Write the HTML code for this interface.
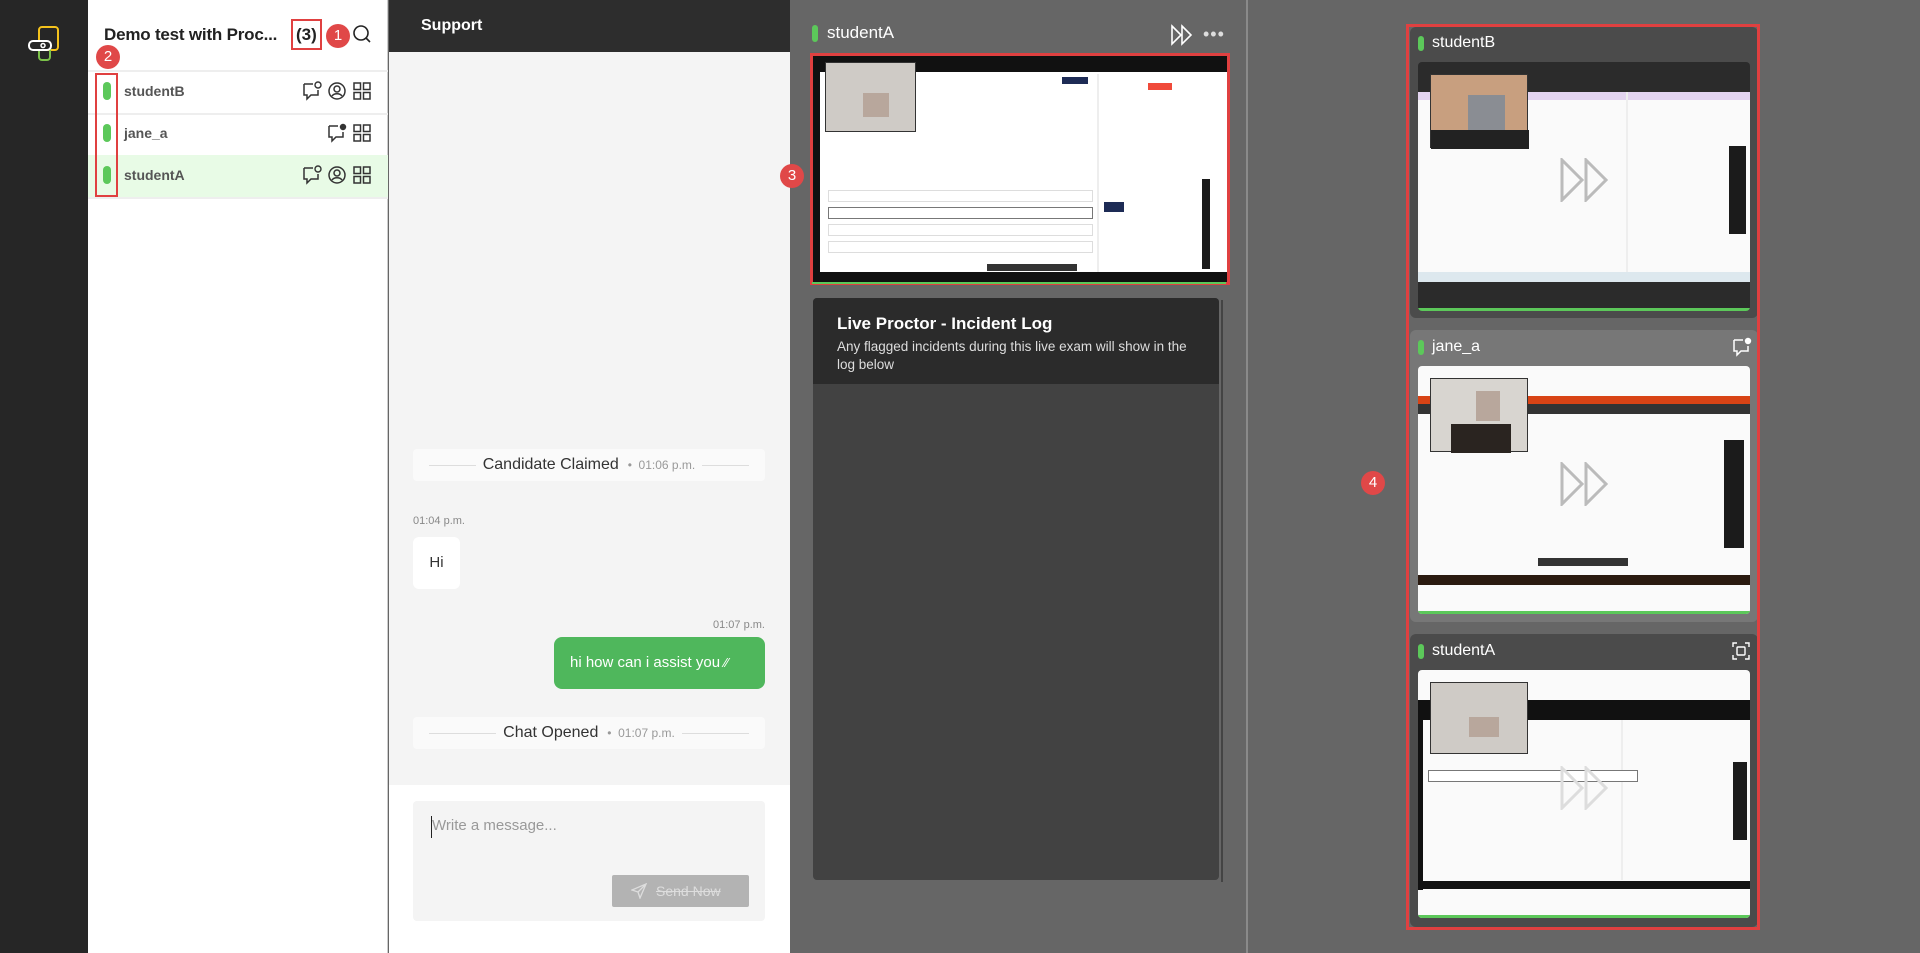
<!DOCTYPE html>
<html><head><meta charset="utf-8">
<style>
*{box-sizing:border-box;margin:0;padding:0}
body{width:1920px;height:953px;overflow:hidden;background:#666;font-family:"Liberation Sans",sans-serif;position:relative}
.a{position:absolute}
.pill{position:absolute;width:8px;height:18px;border-radius:4px;background:#5cc85a}
.badge{position:absolute;width:24px;height:24px;border-radius:50%;background:#e04848;color:#fff;font-size:15px;text-align:center;line-height:24px}
.ev{position:absolute;left:413px;width:352px;height:32px;background:#fafafa;border-radius:4px;font-size:16px;color:#333;text-align:center;line-height:32px}
.ev .ln{position:absolute;top:16px;height:1px;background:#ddd}
.ev small{font-size:12px;color:#999}
.scr{position:absolute;background:#fafafa;overflow:hidden}
.cam{position:absolute;background:#c9c4bd;border:1px solid #333}
.face{position:absolute;background:#b8a79c}
.row{position:absolute;height:12px;background:#fff;border:1px solid #ddd}
.ff{position:absolute}
</style></head><body>
<div class="a" style="left:0;top:0;width:88px;height:953px;background:#262626"></div>
<svg class="a" style="left:26px;top:24px" width="36" height="40" viewBox="0 0 36 40">
<rect x="13" y="3" width="19" height="23" rx="3" fill="none" stroke="#f4c21c" stroke-width="2"/>
<rect x="13" y="18" width="11" height="18" rx="3" fill="none" stroke="#7cc24a" stroke-width="2"/>
<rect x="3" y="17" width="22" height="9" rx="4" fill="#262626" stroke="#fff" stroke-width="2"/>
<circle cx="17" cy="21.5" r="2" fill="none" stroke="#fff" stroke-width="1.5"/>
</svg>
<div class="a" style="left:88px;top:0;width:300px;height:953px;background:#fff;border-right:1px solid #ccc"></div>
<div class="a" style="left:104px;top:25px;font-size:17px;font-weight:bold;color:#222;letter-spacing:-0.2px">Demo test with Proc...</div>
<div class="a" style="left:296px;top:25px;font-size:17px;font-weight:bold;color:#222">(3)</div>
<div class="a" style="left:291px;top:19px;width:31px;height:31px;border:2px solid #e04040"></div>
<div class="badge" style="left:326px;top:24px">1</div>
<svg class="a" style="left:352px;top:24px" width="20" height="20" viewBox="0 0 20 20"><circle cx="9" cy="9" r="7" fill="none" stroke="#222" stroke-width="1.6"/><path d="M14 14l4 4" stroke="#222" stroke-width="1.6"/></svg>
<div class="badge" style="left:96px;top:45px">2</div>
<div class="a" style="left:88px;top:70px;width:300px;height:2px;background:#eee"></div>
<div class="a" style="left:88px;top:113px;width:300px;height:2px;background:#eee"></div>
<div class="a" style="left:88px;top:155px;width:300px;height:42px;background:#e8fbe6"></div>
<div class="a" style="left:88px;top:197px;width:300px;height:2px;background:#eee"></div>
<div class="pill" style="left:103px;top:82px"></div>
<div class="pill" style="left:103px;top:124px"></div>
<div class="pill" style="left:103px;top:166px"></div>
<div class="a" style="left:95px;top:73px;width:23px;height:124px;border:2px solid #e04040"></div>
<div class="a" style="left:124px;top:83px;font-size:14px;font-weight:bold;color:#555">studentB</div>
<div class="a" style="left:124px;top:125px;font-size:14px;font-weight:bold;color:#555">jane_a</div>
<div class="a" style="left:124px;top:167px;font-size:14px;font-weight:bold;color:#555">studentA</div>
<svg width="0" height="0" style="position:absolute"><defs>
<g id="chat"><path d="M2 3h9M2 3v11h3v4l4-4h7v-5" fill="none" stroke="#333" stroke-width="1.5"/><circle cx="16" cy="4" r="3" fill="none" stroke="#333" stroke-width="1.4"/></g>
<g id="chatf"><path d="M2 3h9M2 3v11h3v4l4-4h7v-5" fill="none" stroke="#333" stroke-width="1.5"/><circle cx="16" cy="4" r="3.2" fill="#333"/></g>
<g id="user"><circle cx="10" cy="10" r="8" fill="none" stroke="#333" stroke-width="1.5"/><circle cx="10" cy="8" r="3" fill="none" stroke="#333" stroke-width="1.5"/><path d="M5 15c2-3 8-3 10 0" fill="none" stroke="#333" stroke-width="1.5"/></g>
<g id="grid"><rect x="2" y="2" width="6.5" height="6.5" fill="none" stroke="#333" stroke-width="1.5"/><rect x="11.5" y="2" width="6.5" height="6.5" fill="none" stroke="#333" stroke-width="1.5"/><rect x="2" y="11.5" width="6.5" height="6.5" fill="none" stroke="#333" stroke-width="1.5"/><rect x="11.5" y="11.5" width="6.5" height="6.5" fill="none" stroke="#333" stroke-width="1.5"/></g>
</defs></svg>
<svg class="a" style="left:302px;top:81px" width="20" height="20"><use href="#chat"/></svg>
<svg class="a" style="left:327px;top:81px" width="20" height="20"><use href="#user"/></svg>
<svg class="a" style="left:352px;top:81px" width="20" height="20"><use href="#grid"/></svg>
<svg class="a" style="left:327px;top:123px" width="20" height="20"><use href="#chatf"/></svg>
<svg class="a" style="left:352px;top:123px" width="20" height="20"><use href="#grid"/></svg>
<svg class="a" style="left:302px;top:165px" width="20" height="20"><use href="#chat"/></svg>
<svg class="a" style="left:327px;top:165px" width="20" height="20"><use href="#user"/></svg>
<svg class="a" style="left:352px;top:165px" width="20" height="20"><use href="#grid"/></svg>
<div class="a" style="left:389px;top:0;width:401px;height:52px;background:#2d2d2d"></div>
<div class="a" style="left:421px;top:17px;font-size:16px;font-weight:bold;color:#fff">Support</div>
<div class="a" style="left:389px;top:52px;width:401px;height:733px;background:#f4f4f4"></div>
<div class="a" style="left:389px;top:785px;width:401px;height:168px;background:#fff"></div>
<div class="ev" style="top:449px"><div class="ln" style="left:16px;width:47px"></div><div class="ln" style="right:16px;width:47px"></div>Candidate Claimed &nbsp;<small>•&nbsp; 01:06 p.m.</small></div>
<div class="a" style="left:413px;top:515px;font-size:11px;color:#888">01:04 p.m.</div>
<div class="a" style="left:413px;top:537px;width:47px;height:52px;background:#fff;border-radius:6px;font-size:15px;color:#333;line-height:52px;text-align:center">Hi</div>
<div class="a" style="left:700px;top:619px;font-size:11px;color:#888;width:65px;text-align:right">01:07 p.m.</div>
<div class="a" style="left:554px;top:637px;width:211px;height:52px;background:#4fb75c;border-radius:8px;font-size:15px;color:#fff;line-height:52px;padding-left:16px">hi how can i assist you <span style="font-size:13px">⁄⁄</span></div>
<div class="ev" style="top:717px"><div class="ln" style="left:16px;width:67px"></div><div class="ln" style="right:16px;width:67px"></div>Chat Opened &nbsp;<small>•&nbsp; 01:07 p.m.</small></div>
<div class="a" style="left:413px;top:801px;width:352px;height:120px;background:#f4f4f4;border-radius:4px"></div>
<div class="a" style="left:431px;top:816px;width:1px;height:22px;background:#222"></div>
<div class="a" style="left:432px;top:817px;font-size:15px;color:#999">Write a message...</div>
<div class="a" style="left:612px;top:875px;width:137px;height:32px;background:#b3b3b3;border-radius:2px;color:#ddd;font-size:14px;line-height:32px;padding-left:44px;text-decoration:line-through">Send Now</div>
<svg class="a" style="left:631px;top:883px" width="16" height="16" viewBox="0 0 16 16"><path d="M1 7l14-6-6 14-2-6z M7 9l8-8" fill="none" stroke="#ddd" stroke-width="1.3"/></svg>
<div class="pill" style="left:812px;top:25px;height:17px;width:6px"></div>
<div class="a" style="left:827px;top:23px;font-size:17px;color:#fff">studentA</div>
<svg class="a" style="left:1170px;top:24px" width="24" height="22" viewBox="0 0 24 22"><path d="M2 2l9 9-9 9z M12 2l9 9-9 9z" fill="none" stroke="#fff" stroke-width="1.6"/></svg>
<div class="a" style="left:1203px;top:24px;font-size:18px;color:#ddd;letter-spacing:1px">•••</div>
<div class="scr" style="left:812px;top:54px;width:416px;height:230px;background:#fff">
 <div class="ff" style="left:0;top:0;width:416px;height:18px;background:#111"></div>
 <div class="ff" style="left:0;top:0;width:8px;height:230px;background:#111"></div>
 <div class="ff" style="left:0;top:218px;width:416px;height:12px;background:#111"></div>
 <div class="ff" style="left:285px;top:20px;width:2px;height:198px;background:#eee"></div>
 <div class="cam" style="left:13px;top:8px;width:91px;height:70px;background:#cfcbc6"><div class="face" style="left:37px;top:30px;width:26px;height:24px"></div></div>
 <div class="row" style="left:16px;top:136px;width:265px"></div>
 <div class="row" style="left:16px;top:153px;width:265px;border-color:#777"></div>
 <div class="row" style="left:16px;top:170px;width:265px"></div>
 <div class="row" style="left:16px;top:187px;width:265px"></div>
 <div class="ff" style="left:336px;top:29px;width:24px;height:7px;background:#f04a3a"></div>
 <div class="ff" style="left:250px;top:23px;width:26px;height:7px;background:#1d2b55"></div>
 <div class="ff" style="left:292px;top:148px;width:20px;height:10px;background:#1d2b55"></div>
 <div class="ff" style="left:390px;top:125px;width:8px;height:90px;background:#1b1b1b"></div>
 <div class="ff" style="left:175px;top:210px;width:90px;height:7px;background:#333"></div>
</div>
<div class="a" style="left:810px;top:53px;width:420px;height:232px;border:3px solid #e04040"></div>
<div class="a" style="left:812px;top:282px;width:414px;height:2px;background:#5cc85a"></div>
<div class="badge" style="left:780px;top:164px">3</div>
<div class="a" style="left:813px;top:298px;width:406px;height:582px;background:#424242;border-radius:4px"></div>
<div class="a" style="left:813px;top:298px;width:406px;height:86px;background:#2b2b2b;border-radius:4px 4px 0 0"></div>
<div class="a" style="left:1221px;top:300px;width:2px;height:582px;background:#444"></div>
<div class="a" style="left:837px;top:314px;font-size:17px;font-weight:bold;color:#fff">Live Proctor - Incident Log</div>
<div class="a" style="left:837px;top:338px;width:370px;font-size:13.5px;line-height:18px;color:#ddd">Any flagged incidents during this live exam will show in the log below</div>
<div class="a" style="left:1246px;top:0;width:2px;height:953px;background:#8a8a8a"></div>
<div class="badge" style="left:1361px;top:471px">4</div>
<div class="a" style="left:1410px;top:27px;width:348px;height:291px;background:#4b4b4b;border-radius:6px"></div>
<div class="a" style="left:1410px;top:330px;width:348px;height:292px;background:#777;border-radius:6px"></div>
<div class="a" style="left:1410px;top:634px;width:348px;height:293px;background:#4b4b4b;border-radius:6px"></div>
<div class="pill" style="left:1418px;top:36px;height:15px;width:6px"></div>
<div class="a" style="left:1432px;top:34px;font-size:16px;color:#fff">studentB</div>
<div class="pill" style="left:1418px;top:340px;height:15px;width:6px"></div>
<div class="a" style="left:1432px;top:338px;font-size:16px;color:#fff">jane_a</div>
<svg class="a" style="left:1732px;top:337px" width="20" height="20"><path d="M2 3h9M2 3v11h3v4l4-4h7v-5" fill="none" stroke="#fff" stroke-width="1.5"/><circle cx="16" cy="4" r="3.2" fill="#fff"/></svg>
<div class="pill" style="left:1418px;top:644px;height:15px;width:6px"></div>
<div class="a" style="left:1432px;top:642px;font-size:16px;color:#fff">studentA</div>
<svg class="a" style="left:1732px;top:642px" width="18" height="18" viewBox="0 0 18 18"><path d="M1 5V1h4M13 1h4v4M17 13v4h-4M5 17H1v-4" fill="none" stroke="#fff" stroke-width="1.4"/><rect x="5" y="5" width="8" height="8" rx="1" fill="none" stroke="#fff" stroke-width="1.4"/></svg>
<div class="scr" style="left:1418px;top:62px;width:332px;height:249px;background:#2b2b2b;border-radius:4px">
 <div class="ff" style="left:0;top:30px;width:332px;height:190px;background:#fafafa"></div>
 <div class="ff" style="left:0;top:30px;width:332px;height:8px;background:#e3d4f0"></div>
 <div class="ff" style="left:0;top:210px;width:332px;height:10px;background:#dde8ee"></div>
 <div class="cam" style="left:12px;top:12px;width:98px;height:74px;background:#c89f7f"><div class="face" style="left:37px;top:20px;width:37px;height:42px;background:#8a8d93"></div><div class="ff" style="left:0;top:55px;width:98px;height:19px;background:#222"></div></div>
 <div class="ff" style="left:208px;top:30px;width:2px;height:180px;background:#eee"></div>
 <div class="ff" style="left:311px;top:84px;width:17px;height:88px;background:#1b1b1b"></div>
 <svg class="ff" style="left:142px;top:96px" width="50" height="44" viewBox="0 0 50 44"><path d="M2 2l20 20-20 20z M26 2l20 20-20 20z" fill="none" stroke="#bbb" stroke-width="3"/></svg>
 <div class="ff" style="left:0;top:246px;width:332px;height:3px;background:#5cc85a"></div>
</div>
<div class="scr" style="left:1418px;top:366px;width:332px;height:248px;border-radius:4px">
 <div class="ff" style="left:0;top:30px;width:332px;height:8px;background:#d84315"></div>
 <div class="ff" style="left:0;top:38px;width:332px;height:10px;background:#333"></div>
 <div class="ff" style="left:0;top:209px;width:332px;height:10px;background:#2a1a10"></div>
 <div class="cam" style="left:12px;top:12px;width:98px;height:74px;background:#d8d5d0"><div class="face" style="left:45px;top:12px;width:24px;height:30px"></div><div class="ff" style="left:20px;top:45px;width:60px;height:29px;background:#2a2420"></div></div>
 <div class="ff" style="left:306px;top:74px;width:20px;height:108px;background:#1b1b1b"></div>
 <div class="ff" style="left:120px;top:192px;width:90px;height:8px;background:#333"></div>
 <svg class="ff" style="left:142px;top:96px" width="50" height="44" viewBox="0 0 50 44"><path d="M2 2l20 20-20 20z M26 2l20 20-20 20z" fill="none" stroke="#bbb" stroke-width="3"/></svg>
 <div class="ff" style="left:0;top:245px;width:332px;height:3px;background:#5cc85a"></div>
</div>
<div class="scr" style="left:1418px;top:670px;width:332px;height:248px;border-radius:4px">
 <div class="ff" style="left:0;top:30px;width:332px;height:20px;background:#111"></div>
 <div class="ff" style="left:0;top:30px;width:5px;height:190px;background:#111"></div>
 <div class="ff" style="left:0;top:211px;width:332px;height:8px;background:#111"></div>
 <div class="cam" style="left:12px;top:12px;width:98px;height:72px;background:#cfcbc6"><div class="face" style="left:38px;top:34px;width:30px;height:20px"></div></div>
 <div class="ff" style="left:203px;top:50px;width:2px;height:160px;background:#eee"></div>
 <div class="ff" style="left:315px;top:92px;width:14px;height:78px;background:#1b1b1b"></div>
 <div class="row" style="left:10px;top:100px;width:210px;border-color:#777"></div>
 <svg class="ff" style="left:142px;top:96px" width="50" height="44" viewBox="0 0 50 44"><path d="M2 2l20 20-20 20z M26 2l20 20-20 20z" fill="none" stroke="#ddd" stroke-width="3"/></svg>
 <div class="ff" style="left:0;top:245px;width:332px;height:3px;background:#5cc85a"></div>
</div>
<div class="a" style="left:1406px;top:24px;width:354px;height:906px;border:3px solid #e04040"></div>
</body></html>
